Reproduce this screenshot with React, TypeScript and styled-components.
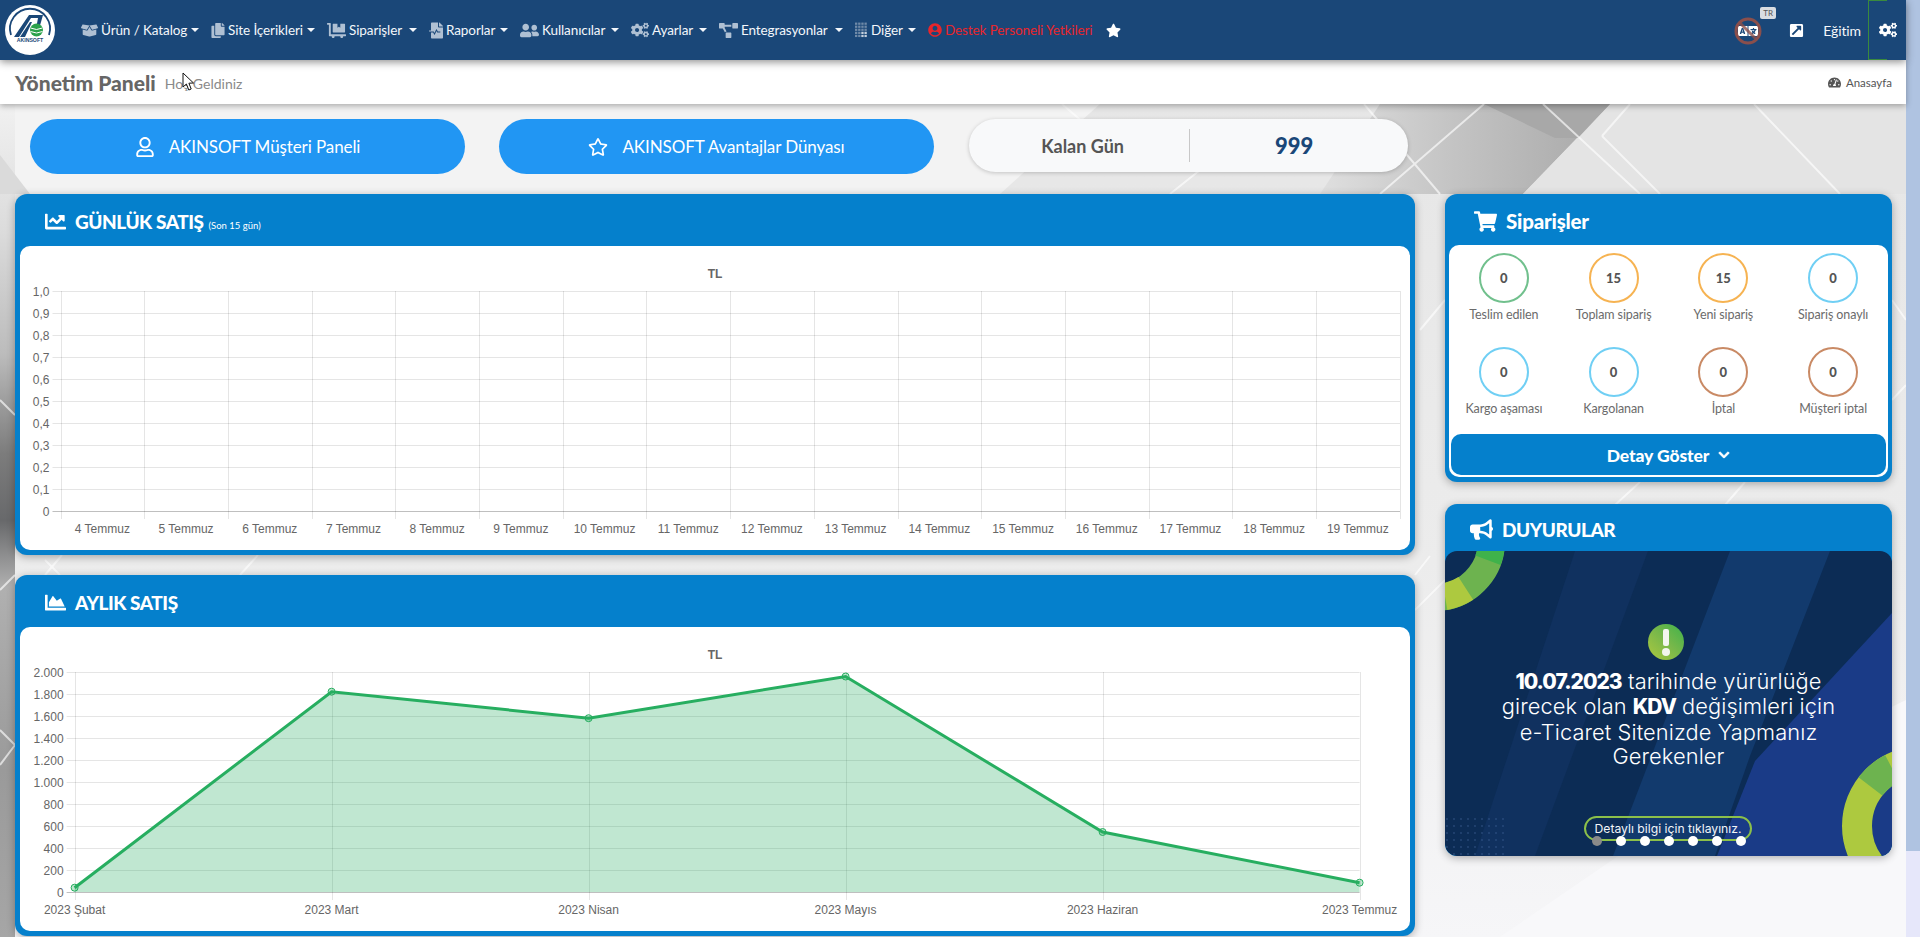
import React from "react";
import styled, { createGlobalStyle } from "styled-components";
import {
  FaBoxOpen, FaCopy, FaDollyFlatbed, FaFileMedicalAlt, FaUserFriends, FaCogs, FaProjectDiagram,
  FaUserCircle, FaStar, FaTachometerAlt, FaRegUser, FaRegStar, FaChartLine, FaChartArea,
  FaShoppingCart, FaBullhorn, FaChevronDown, FaExternalLinkSquareAlt, FaLanguage,
} from "react-icons/fa";

const UI_FONT = `Lato, "Open Sans", Arial, sans-serif`;

const Global = createGlobalStyle`
  html, body { margin: 0; padding: 0; height: 937px; overflow: hidden; background: #f2f2f4; }
  * { box-sizing: border-box; }
  body { font-family: ${UI_FONT}; }
`;

const Page = styled.div`
  position: relative;
  display: flex;
  width: 1920px;
  height: 937px;
  overflow: hidden;
`;
const Main = styled.div`
  width: 1906px;
  height: 937px;
  display: flex;
  flex-direction: column;
`;
const Rail = styled.div`
  width: 14px;
  display: flex;
  flex-direction: column;
`;
const RailTop = styled.div`
  height: 851px;
  background: #afc3e1;
`;
const RailBottom = styled.div`
  flex: 1;
  background: #e6e7fa;
`;
const MouseCursor = styled.svg`
  position: absolute;
  left: 182px;
  top: 72px;
  z-index: 9;
`;

const Topbar = styled.header`
  height: 60px;
  flex: none;
  background: #1a4778;
  display: flex;
  align-items: center;
  padding-left: 5px;
  position: relative;
  z-index: 3;
  box-shadow: 0 2px 8px rgba(0, 0, 0, 0.45);
`;
const Nav = styled.nav`
  display: flex;
  align-items: center;
  gap: 12px;
  margin-left: 25px;
`;
const NavItem = styled.a<{ $red?: boolean }>`
  display: flex;
  align-items: center;
  gap: 3px;
  color: ${(p) => (p.$red ? "#e8252b" : "#f4f7fb")};
  font-size: 13.5px;
  letter-spacing: -0.1px;
  white-space: nowrap;
`;
const NavIcon = styled.span<{ $red?: boolean; $w: number }>`
  display: inline-flex;
  justify-content: center;
  width: ${(p) => p.$w}px;
  color: ${(p) => (p.$red ? "#e8252b" : "#afc0d3")};
`;
const NavLabel = styled.span<{ $w: number }>`
  display: inline-block;
  width: ${(p) => p.$w}px;
`;
const Caret = styled.span`
  width: 0;
  height: 0;
  margin-left: 2px;
  border-left: 4px solid transparent;
  border-right: 4px solid transparent;
  border-top: 4px solid #f4f7fb;
`;
const StarIcon = styled.span`
  display: inline-flex;
  color: #fff;
  font-size: 15px;
`;
const RightTools = styled.div`
  margin-left: auto;
  display: flex;
  align-items: center;
  height: 60px;
`;
const TranslateBox = styled.div`
  position: relative;
  width: 28px;
  height: 28px;
  display: flex;
  align-items: center;
  justify-content: center;
  color: #fff;
  font-size: 20px;
  margin-right: 27px;
  margin-top: 1px;
`;
const TranslateBan = styled.svg`
  position: absolute;
  inset: 0;
`;
const LangBadge = styled.span`
  position: absolute;
  top: -10px;
  left: 26px;
  width: 16px;
  height: 12px;
  border-radius: 2px;
  background: #d9dde2;
  color: #555;
  font-size: 8px;
  line-height: 12px;
  text-align: center;
`;
const ExternalIcon = styled.span`
  display: inline-flex;
  color: #fff;
  font-size: 15px;
  margin-right: 19px;
`;
const ToolText = styled.span`
  color: #f4f7fb;
  font-size: 14px;
  letter-spacing: -0.1px;
  margin-right: 7px;
`;
const GearButton = styled.div`
  position: relative;
  width: 38px;
  height: 60px;
  display: flex;
  align-items: center;
  justify-content: flex-start;
  padding-left: 11px;
  color: #fff;
  font-size: 18px;
  &::before {
    content: "";
    position: absolute;
    left: 0;
    top: 0;
    bottom: 0;
    width: 18px;
    border: 1px solid #3a8a3e;
    border-right: none;
  }
`;

const Subbar = styled.div`
  height: 44px;
  flex: none;
  background: #fff;
  display: flex;
  align-items: center;
  padding: 0 14px 0 15px;
  position: relative;
  z-index: 2;
  box-shadow: 0 2px 6px rgba(0, 0, 0, 0.3);
`;
const PageTitle = styled.h1`
  margin: 0;
  font-size: 21px;
  font-weight: 900;
  color: #666;
`;
const PageSub = styled.span`
  margin: 3px 0 0 9px;
  font-size: 14px;
  color: #8a8a8a;
`;
const Crumb = styled.div`
  margin-left: auto;
  display: flex;
  align-items: center;
  gap: 5px;
  font-size: 11.5px;
  color: #555;
`;

const Content = styled.main`
  position: relative;
  flex: 1;
  padding: 15px 14px 0 15px;
  overflow: hidden;
`;
const Backdrop = styled.svg`
  position: absolute;
  inset: 0;
  width: 100%;
  height: 100%;
`;
const Foreground = styled.div`
  position: relative;
  z-index: 1;
`;
const LinkRow = styled.div`
  display: flex;
  align-items: flex-start;
  gap: 34px;
  padding-left: 15px;
  margin-bottom: 20px;
`;
const PillButton = styled.a`
  width: 435px;
  height: 55px;
  border-radius: 28px;
  background: #2196f3;
  color: #fff;
  font-size: 17px;
  letter-spacing: -0.1px;
  display: flex;
  align-items: center;
  justify-content: center;
  gap: 14px;
  svg {
    font-size: 20px;
  }
`;
const RemainBox = styled.div`
  width: 439px;
  height: 53px;
  margin-left: 0.6px;
  border-radius: 27px;
  background: #f8f9fa;
  box-shadow: 0 1px 4px rgba(0, 0, 0, 0.2);
  display: flex;
  align-items: center;
`;
const RemainLabel = styled.div`
  width: 221px;
  height: 33px;
  padding-left: 8px;
  border-right: 1px solid #c8c8c8;
  display: flex;
  align-items: center;
  justify-content: center;
  font-size: 18px;
  font-weight: 700;
  color: #555;
`;
const RemainValue = styled.div`
  flex: 1;
  padding-right: 9px;
  text-align: center;
  font-size: 22px;
  font-weight: 900;
  color: #1a4778;
`;

const Columns = styled.div`
  display: grid;
  grid-template-columns: 1400px 447px;
  column-gap: 30px;
  align-items: start;
`;
const Column = styled.div<{ $gap: number }>`
  display: flex;
  flex-direction: column;
  gap: ${(p) => p.$gap}px;
`;
const Card = styled.section<{ $flush?: boolean }>`
  background: #0580cc;
  border-radius: 12px;
  padding: ${(p) => (p.$flush ? "0" : "0 5px 5px")};
  box-shadow: 0 2px 8px rgba(0, 0, 0, 0.3);
  overflow: hidden;
`;
const CardHead = styled.div<{ $h: number; $pad: number }>`
  height: ${(p) => p.$h}px;
  display: flex;
  align-items: center;
  gap: 9px;
  padding: 3px 0 0 ${(p) => p.$pad}px;
  color: #fff;
`;
const CardIcon = styled.span<{ $size?: number }>`
  display: inline-flex;
  font-size: ${(p) => p.$size ?? 21}px;
`;
const CardTitle = styled.h2<{ $tight?: boolean }>`
  margin: 0;
  font-size: ${(p) => (p.$tight ? "19px" : "20.5px")};
  font-weight: 900;
  letter-spacing: ${(p) => (p.$tight ? "-0.45px" : "-0.2px")};
  white-space: nowrap;
`;
const CardTitleNote = styled.small`
  font-size: 9.5px;
  font-weight: 400;
  margin-left: 5px;
  letter-spacing: 0;
`;
const ChartBody = styled.div`
  height: 304px;
  background: #fff;
  border-radius: 10px;
`;
const ChartSvg = styled.svg`
  display: block;
  font-family: "Liberation Sans", Arial, sans-serif;
  font-size: 12px;
  text {
    fill: #666;
  }
`;

const OrdersBody = styled.div`
  margin: 0 4px;
  background: #fff;
  border-radius: 10px;
  height: 232px;
  display: flex;
  flex-direction: column;
`;
const StatGrid = styled.div`
  display: grid;
  grid-template-columns: repeat(4, 1fr);
  align-content: start;
  row-gap: 23px;
  padding-top: 8px;
  height: 189px;
`;
const Stat = styled.div`
  display: flex;
  flex-direction: column;
  align-items: center;
`;
const StatRing = styled.div<{ $color: string }>`
  width: 50px;
  height: 50px;
  border-radius: 50%;
  border: 2px solid ${(p) => p.$color};
  display: flex;
  align-items: center;
  justify-content: center;
  font-size: 13px;
  font-weight: 900;
  color: #555;
`;
const StatLabel = styled.div`
  margin-top: 3px;
  height: 18px;
  line-height: 18px;
  font-size: 12.5px;
  letter-spacing: -0.1px;
  color: #6b6b6b;
  white-space: nowrap;
`;
const DetailButton = styled.a`
  margin: 0 2px;
  height: 41px;
  padding-top: 1px;
  background: #0580cc;
  border-radius: 10px;
  color: #fff;
  font-size: 17.5px;
  font-weight: 900;
  letter-spacing: -0.1px;
  display: flex;
  align-items: center;
  justify-content: center;
  gap: 9px;
  svg {
    font-size: 12px;
    stroke: currentColor;
    stroke-width: 30;
  }
`;
const OrdersFoot = styled.div`
  height: 5px;
`;

const Banner = styled.div`
  position: relative;
  height: 305px;
  background: #0c2c55;
  border-radius: 12px;
  overflow: hidden;
  color: #fff;
  display: flex;
  flex-direction: column;
  align-items: center;
  padding: 73px 0 0 0;
`;
const BannerArt = styled.svg`
  position: absolute;
  inset: 0;
`;
const BannerText = styled.p`
  position: relative;
  margin: 9px 0 0;
  font-family: Inter, "Open Sans", sans-serif;
  font-size: 21.8px;
  font-weight: 300;
  line-height: 24.4px;
  letter-spacing: 0.1px;
  text-align: center;
  white-space: nowrap;
  b {
    font-size: 21px;
    font-weight: 800;
    letter-spacing: -1px;
  }
`;
const AlertMark = styled.svg`
  position: relative;
  display: block;
  flex: none;
  margin-left: -6px;
`;
const BannerCta = styled.div`
  position: absolute;
  left: 139px;
  bottom: 15px;
  width: 168px;
  height: 25px;
  border: 2px solid #8cc04a;
  border-radius: 13px;
  color: #f2f5f8;
  font-family: Inter, "Open Sans", sans-serif;
  font-size: 12.2px;
  font-weight: 400;
  text-align: center;
  line-height: 21px;
`;
const Dots = styled.div`
  position: absolute;
  left: 147px;
  bottom: 10px;
  display: flex;
  gap: 14px;
`;
const Dot = styled.span<{ $on?: boolean }>`
  width: 10px;
  height: 10px;
  border-radius: 50%;
  background: ${(p) => (p.$on ? "#8a8a8a" : "#fff")};
`;

function GridGlyph({ size = 16 }: { size?: number }) {
  const cells: React.ReactNode[] = [];
  for (let r = 0; r < 5; r++) {
    for (let c = 0; c < 4; c++) {
      const solid = r > 2 && c > 1;
      cells.push(
        <rect
          key={`${r}-${c}`}
          x={c * 3.4}
          y={r * 3.3}
          width={2.5}
          height={2.4}
          fill={solid ? "#c4d0dd" : "#6f8aa8"}
        />
      );
    }
  }
  return (
    <svg width={14} height={size} viewBox="0 0 14 16">
      {cells}
    </svg>
  );
}

const menu: { icon: React.ElementType; label: string; size: number; iw: number; tw: number }[] = [
  { icon: FaBoxOpen, label: "Ürün / Katalog", size: 17, iw: 18, tw: 85 },
  { icon: FaCopy, label: "Site İçerikleri", size: 15, iw: 14, tw: 74 },
  { icon: FaDollyFlatbed, label: "Siparişler", size: 19, iw: 19, tw: 55 },
  { icon: FaFileMedicalAlt, label: "Raporlar", size: 17, iw: 14, tw: 49 },
  { icon: FaUserFriends, label: "Kullanıcılar", size: 19, iw: 19, tw: 64 },
  { icon: FaCogs, label: "Ayarlar", size: 18, iw: 18, tw: 42 },
  { icon: FaProjectDiagram, label: "Entegrasyonlar", size: 19, iw: 19, tw: 89 },
  { icon: GridGlyph, label: "Diğer", size: 16, iw: 13, tw: 32 },
];

function Logo() {
  return (
    <svg width="50" height="50" viewBox="0 0 50 50">
      <circle cx="25" cy="25" r="25" fill="#fff" />
      <path d="M6 30 A20 20 0 1 1 44 30" fill="none" stroke="#1a4778" strokeWidth="1.8" />
      <polygon points="9,32 24,10 38,10 34,24 31,24 33,13 26,13 14,32" fill="#1a4778" />
      <polygon points="15,32 25,17 27,17 20,32" fill="#1a4778" />
      <circle cx="31.5" cy="25" r="6.5" fill="#2ba14b" />
      <path d="M25.5 23 Q31.5 26 37.5 23 M25.5 26.5 Q31.5 29.5 37.5 26.5" stroke="#fff" strokeWidth="1" fill="none" />
      <text x="25" y="36.5" textAnchor="middle" fontSize="5.2" fontWeight="900" fill="#1a4778" fontFamily="Liberation Sans, Arial, sans-serif">
        AKINSOFT
      </text>
    </svg>
  );
}

function Background() {
  return (
    <Backdrop viewBox="0 104 1906 833" preserveAspectRatio="none">
      <defs>
        <linearGradient id="bgBase" x1="0" y1="0" x2="0" y2="1">
          <stop offset="0" stopColor="#e6e6e6" />
          <stop offset="0.55" stopColor="#ececec" />
          <stop offset="1" stopColor="#f6f6f8" />
        </linearGradient>
        <linearGradient id="bgLeft" x1="0" y1="0" x2="0" y2="1">
          <stop offset="0" stopColor="#f1f1f1" />
          <stop offset="0.15" stopColor="#dcdcdc" />
          <stop offset="0.3" stopColor="#bcbcbc" />
          <stop offset="0.42" stopColor="#7c7c7c" />
          <stop offset="0.5" stopColor="#68696b" />
          <stop offset="0.58" stopColor="#b0b0b0" />
          <stop offset="0.8" stopColor="#9a9a9a" />
          <stop offset="1" stopColor="#a6a6a6" />
        </linearGradient>
        <linearGradient id="bgDark" x1="0" y1="0" x2="1" y2="0">
          <stop offset="0" stopColor="#dfdfdf" />
          <stop offset="0.45" stopColor="#c4c4c4" />
          <stop offset="1" stopColor="#a8a8a8" />
        </linearGradient>
      </defs>
      <rect x="0" y="104" width="1906" height="833" fill="url(#bgBase)" />
      <polygon points="0,104 1100,104 1000,194 0,194" fill="#f3f3f3" />
      <polygon points="1380,104 1610,104 1523,194 1320,194" fill="url(#bgDark)" />
      <polygon points="1610,104 1906,104 1906,194 1523,194" fill="#e4e4e4" />
      <polygon points="1484,104 1610,104 1578,138 1555,138" fill="#a8a8a8" />
      <rect x="0" y="104" width="15" height="833" fill="url(#bgLeft)" />
      <polygon points="0,155 30,194 0,194" fill="#dadada" />
      <g stroke="#fff" strokeWidth="2" opacity="0.65" fill="none">
        <line x1="1484" y1="104" x2="1380" y2="194" />
        <line x1="1364" y1="104" x2="1440" y2="194" />
        <line x1="1543" y1="104" x2="1640" y2="194" />
        <line x1="1630" y1="104" x2="1602" y2="136" />
        <line x1="1602" y1="136" x2="1660" y2="194" />
        <line x1="1754" y1="104" x2="1840" y2="194" />
        <line x1="1062" y1="104" x2="1092" y2="130" />
        <line x1="1200" y1="170" x2="1170" y2="194" />
        <line x1="1420" y1="330" x2="1445" y2="300" />
        <line x1="1445" y1="580" x2="1415" y2="610" />
        <line x1="1892" y1="300" x2="1906" y2="320" />
        <line x1="1892" y1="400" x2="1906" y2="385" />
        <line x1="0" y1="400" x2="15" y2="415" />
        <line x1="0" y1="765" x2="15" y2="745" />
        <line x1="0" y1="590" x2="15" y2="575" />
        <line x1="0" y1="730" x2="15" y2="745" />
        <line x1="60" y1="575" x2="45" y2="560" />
        <line x1="45" y1="575" x2="62" y2="555" />
        <line x1="240" y1="575" x2="258" y2="555" />
        <line x1="1430" y1="556" x2="1415" y2="575" />
        <line x1="1640" y1="482" x2="1615" y2="505" />
        <line x1="1745" y1="482" x2="1725" y2="505" />
      </g>
      <polygon points="1500,937 1700,800 1906,700 1906,937" fill="#f8f8fa" />
    </Backdrop>
  );
}

const GREEN = "#27ae60";

function YAxisGrid({ x0, x1, labels }: { x0: number; x1: number; labels: string[] }) {
  const top = 45;
  const step = 22;
  return (
    <>
      {labels.map((l, i) => {
        const y = top + i * step + 0.5;
        const last = i === labels.length - 1;
        return (
          <g key={l}>
            <line x1={x0 - 8} x2={x1} y1={y} y2={y} stroke={last ? "rgba(0,0,0,0.25)" : "rgba(0,0,0,0.1)"} />
            <text x={x0 - 11} y={y + 4} textAnchor="end">
              {l}
            </text>
          </g>
        );
      })}
    </>
  );
}

function DailyChart() {
  const x0 = 40.5;
  const step = 83.7;
  const yLabels = ["1,0", "0,9", "0,8", "0,7", "0,6", "0,5", "0,4", "0,3", "0,2", "0,1", "0"];
  const days = Array.from({ length: 16 }, (_, i) => `${i + 4} Temmuz`);
  return (
    <ChartSvg width="1390" height="304" viewBox="0 0 1390 304">
      <text x="695" y="32" textAnchor="middle" fontWeight="700">TL</text>
      {Array.from({ length: 17 }, (_, i) => {
        const x = Math.round(x0 + i * step) + 0.5;
        return <line key={i} x1={x} x2={x} y1={45} y2={273} stroke="rgba(0,0,0,0.1)" />;
      })}
      <YAxisGrid x0={x0} x1={1380} labels={yLabels} />
      {days.map((d, i) => (
        <text key={d} x={x0 + (i + 0.5) * step} y={287} textAnchor="middle">
          {d}
        </text>
      ))}
    </ChartSvg>
  );
}

function MonthlyChart() {
  const x0 = 54.6;
  const step = 257;
  const yLabels = ["2.000", "1.800", "1.600", "1.400", "1.200", "1.000", "800", "600", "400", "200", "0"];
  const months = ["2023 Şubat", "2023 Mart", "2023 Nisan", "2023 Mayıs", "2023 Haziran", "2023 Temmuz"];
  const ys = [260.7, 64.7, 91.2, 49.5, 205, 255.7];
  const pts = ys.map((y, i) => `${x0 + i * step},${y}`).join(" ");
  const area = `${x0},265 ${pts} ${x0 + 5 * step},265`;
  return (
    <ChartSvg width="1390" height="304" viewBox="0 0 1390 304">
      <text x="695" y="32" textAnchor="middle" fontWeight="700">TL</text>
      {months.map((m, i) => {
        const x = Math.round(x0 + i * step) + 0.5;
        return <line key={m} x1={x} x2={x} y1={45} y2={273} stroke="rgba(0,0,0,0.1)" />;
      })}
      <YAxisGrid x0={x0} x1={x0 + 5 * step} labels={yLabels} />
      <polygon points={area} fill="rgba(39,174,96,0.29)" />
      <polyline points={pts} fill="none" stroke={GREEN} strokeWidth="3" />
      {ys.map((y, i) => (
        <circle key={i} cx={x0 + i * step} cy={y} r="3.5" fill="rgba(39,174,96,0.3)" stroke={GREEN} strokeWidth="1" />
      ))}
      {months.map((m, i) => (
        <text key={m} x={x0 + i * step} y={287} textAnchor="middle">
          {m}
        </text>
      ))}
    </ChartSvg>
  );
}

function BannerDecor() {
  return (
    <BannerArt width="447" height="305" viewBox="0 0 447 305">
      <defs>
        <pattern id="bnDots" width="7" height="7" patternUnits="userSpaceOnUse">
          <circle cx="2" cy="2" r="0.7" fill="#3c5f95" />
        </pattern>
      </defs>
      <polygon points="130,0 203,0 90,305 30,305" fill="#10315f" />
      <polygon points="285,0 385,0 305,205 270,305 168,305" fill="#123a6d" />
      <polygon points="447,62 447,305 272,305 310,210" fill="#1a3b87" />
      <rect x="0" y="262" width="60" height="43" fill="url(#bnDots)" />
      <circle cx="-10" cy="-10" r="56.5" fill="none" stroke="#6db34f" strokeWidth="27" />
      <path d="M 0 45.6 A 56.5 56.5 0 0 0 20.8 37.4" fill="none" stroke="#adc93f" strokeWidth="27" />
      <path d="M 43 9.3 A 56.5 56.5 0 0 0 46.5 -10" fill="none" stroke="#3fb24b" strokeWidth="27" />
      <circle cx="477" cy="275" r="65" fill="none" stroke="#adc93f" strokeWidth="30" />
      <path d="M 425.4 235.4 A 65 65 0 0 1 447 217.3" fill="none" stroke="#6db34f" strokeWidth="30" />
    </BannerArt>
  );
}

function AlertIcon() {
  return (
    <AlertMark width="36" height="36" viewBox="0 0 36 36">
      <defs>
        <linearGradient id="alertGrad" x1="0" y1="1" x2="1" y2="0">
          <stop offset="0" stopColor="#adc93f" />
          <stop offset="0.5" stopColor="#7ab84a" />
          <stop offset="1" stopColor="#3fb24b" />
        </linearGradient>
      </defs>
      <circle cx="18" cy="18" r="18" fill="url(#alertGrad)" />
      <rect x="15" y="5" width="6" height="17" rx="2" fill="#f4f6ee" />
      <circle cx="18" cy="28" r="4" fill="#f4f6ee" />
    </AlertMark>
  );
}

const stats = [
  { v: 0, l: "Teslim edilen", c: "#71c08d" },
  { v: 15, l: "Toplam sipariş", c: "#f6b352" },
  { v: 15, l: "Yeni sipariş", c: "#f6b352" },
  { v: 0, l: "Sipariş onaylı", c: "#70cff4" },
  { v: 0, l: "Kargo aşaması", c: "#70cff4" },
  { v: 0, l: "Kargolanan", c: "#70cff4" },
  { v: 0, l: "İptal", c: "#c98a65" },
  { v: 0, l: "Müşteri iptal", c: "#c98a65" },
];

export default function App() {
  return (
    <Page>
      <Global />
      <Main>
        <Topbar>
          <Logo />
          <Nav>
            {menu.map(({ icon: Icon, label, size, iw, tw }) => (
              <NavItem key={label}>
                <NavIcon $w={iw}>
                  <Icon size={size} />
                </NavIcon>
                <NavLabel $w={tw}>{label}</NavLabel>
                <Caret />
              </NavItem>
            ))}
            <NavItem $red>
              <NavIcon $red $w={14}>
                <FaUserCircle size={14} />
              </NavIcon>
              <NavLabel $w={149}>Destek Personeli Yetkileri</NavLabel>
            </NavItem>
            <StarIcon>
              <FaStar />
            </StarIcon>
          </Nav>
          <RightTools>
            <TranslateBox>
              <FaLanguage />
              <TranslateBan width="28" height="28" viewBox="0 0 28 28">
                <circle cx="14" cy="14" r="12" fill="none" stroke="#8a4f4c" strokeWidth="3" />
                <line x1="5" y1="5" x2="23" y2="23" stroke="#8a4f4c" strokeWidth="3" opacity="0.8" />
              </TranslateBan>
              <LangBadge>TR</LangBadge>
            </TranslateBox>
            <ExternalIcon>
              <FaExternalLinkSquareAlt />
            </ExternalIcon>
            <ToolText>Eğitim</ToolText>
            <GearButton>
              <FaCogs />
            </GearButton>
          </RightTools>
        </Topbar>
        <Subbar>
          <PageTitle>Yönetim Paneli</PageTitle>
          <PageSub>Hoş Geldiniz</PageSub>
          <Crumb>
            <FaTachometerAlt size={13} />
            Anasayfa
          </Crumb>
        </Subbar>
        <Content>
          <Background />
          <Foreground>
            <LinkRow>
              <PillButton>
                <FaRegUser />
                AKINSOFT Müşteri Paneli
              </PillButton>
              <PillButton>
                <FaRegStar />
                AKINSOFT Avantajlar Dünyası
              </PillButton>
              <RemainBox>
                <RemainLabel>Kalan Gün</RemainLabel>
                <RemainValue>999</RemainValue>
              </RemainBox>
            </LinkRow>
            <Columns>
              <Column $gap={20}>
                <Card>
                  <CardHead $h={52} $pad={25}>
                    <CardIcon>
                      <FaChartLine />
                    </CardIcon>
                    <CardTitle $tight>
                      GÜNLÜK SATIŞ<CardTitleNote>(Son 15 gün)</CardTitleNote>
                    </CardTitle>
                  </CardHead>
                  <ChartBody>
                    <DailyChart />
                  </ChartBody>
                </Card>
                <Card>
                  <CardHead $h={52} $pad={25}>
                    <CardIcon>
                      <FaChartArea />
                    </CardIcon>
                    <CardTitle $tight>AYLIK SATIŞ</CardTitle>
                  </CardHead>
                  <ChartBody>
                    <MonthlyChart />
                  </ChartBody>
                </Card>
              </Column>
              <Column $gap={22}>
                <Card $flush>
                  <CardHead $h={51} $pad={29}>
                    <CardIcon $size={23}>
                      <FaShoppingCart />
                    </CardIcon>
                    <CardTitle>Siparişler</CardTitle>
                  </CardHead>
                  <OrdersBody>
                    <StatGrid>
                      {stats.map((s) => (
                        <Stat key={s.l}>
                          <StatRing $color={s.c}>{s.v}</StatRing>
                          <StatLabel>{s.l}</StatLabel>
                        </Stat>
                      ))}
                    </StatGrid>
                    <DetailButton>
                      Detay Göster
                      <FaChevronDown />
                    </DetailButton>
                  </OrdersBody>
                  <OrdersFoot />
                </Card>
                <Card $flush>
                  <CardHead $h={47} $pad={25}>
                    <CardIcon $size={23}>
                      <FaBullhorn />
                    </CardIcon>
                    <CardTitle $tight>DUYURULAR</CardTitle>
                  </CardHead>
                  <Banner>
                    <BannerDecor />
                    <AlertIcon />
                    <BannerText>
                      <b>10.07.2023</b> tarihinde yürürlüğe
                      <br />
                      girecek olan <b>KDV</b> değişimleri için
                      <br />
                      e-Ticaret Sitenizde Yapmanız
                      <br />
                      Gerekenler
                    </BannerText>
                    <BannerCta>Detaylı bilgi için tıklayınız.</BannerCta>
                    <Dots>
                      {[0, 1, 2, 3, 4, 5, 6].map((i) => (
                        <Dot key={i} $on={i === 0} />
                      ))}
                    </Dots>
                  </Banner>
                </Card>
              </Column>
            </Columns>
          </Foreground>
        </Content>
      </Main>
      <Rail>
        <RailTop />
        <RailBottom />
      </Rail>
      <MouseCursor width="13" height="20" viewBox="0 0 13 20">
        <path d="M1 1 L1 15 L4.4 12 L6.8 18 L9.2 17 L6.9 11.2 L11.5 11 Z" fill="#fff" stroke="#111" strokeWidth="1" strokeLinejoin="round" />
      </MouseCursor>
    </Page>
  );
}
